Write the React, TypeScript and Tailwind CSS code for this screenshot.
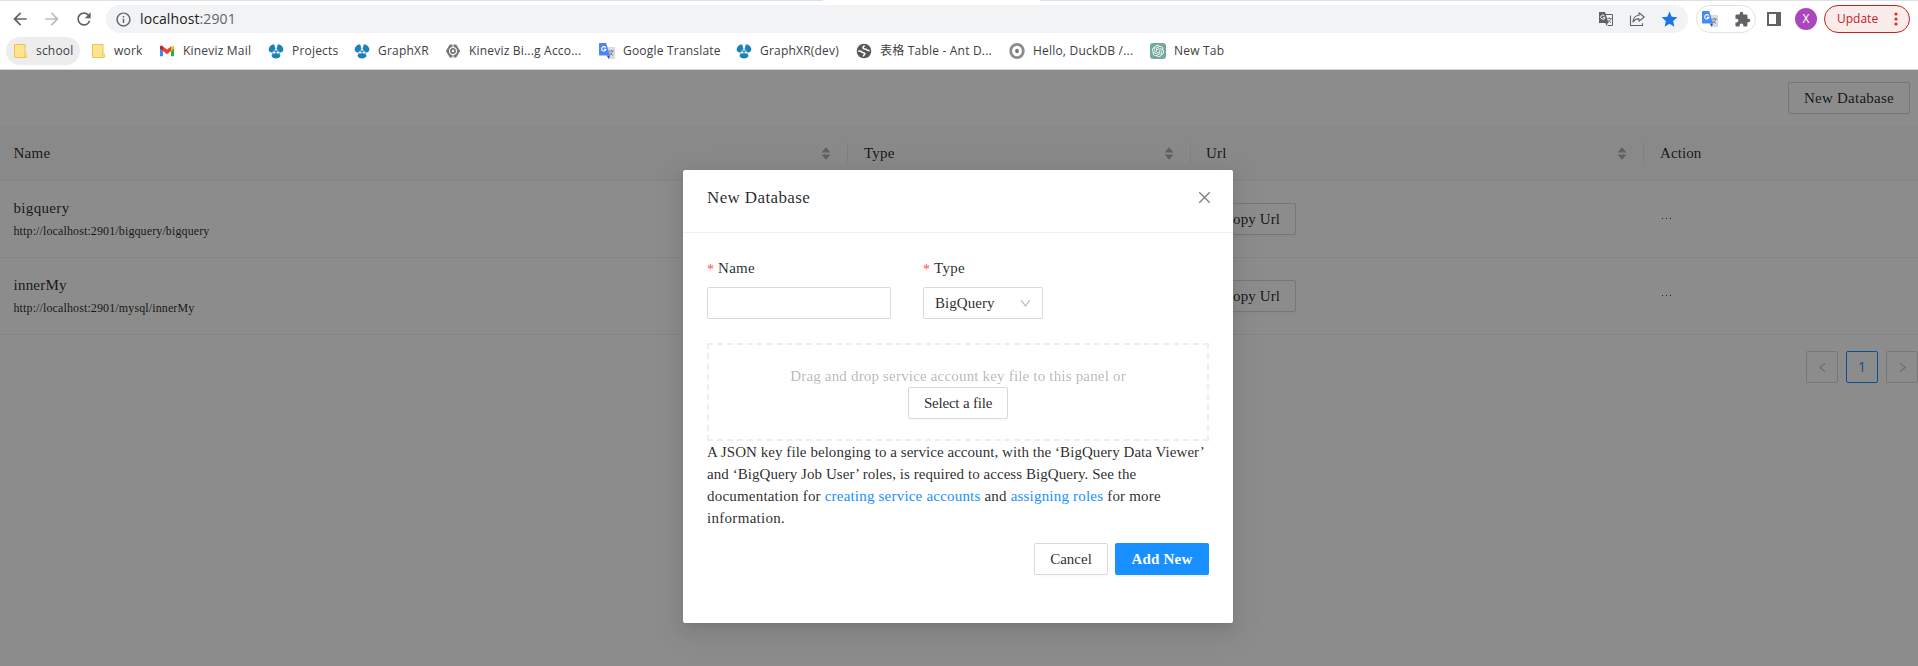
import type { ReactNode } from "react";
import {
  AiFillCaretDown,
  AiFillCaretUp,
  AiOutlineClose,
  AiOutlineDown,
  AiOutlineLeft,
  AiOutlineRight,
} from "react-icons/ai";
import { MdArrowBack, MdArrowForward, MdExtension, MdInfoOutline, MdRefresh, MdStar } from "react-icons/md";
import { SiOpenai } from "react-icons/si";

/* ---------- browser icons ---------- */

function FolderIcon() {
  return (
    <svg viewBox="0 0 16 16" className="size-4">
      <path d="M1.5 1.5h10.5v9.5l1 0v3.5H1.5z" fill="#ffe48f" stroke="#eac54f" />
      <path d="M11.5 14.5v-3.5c0-1 1.8-1 1.8 0v3.5z" fill="#ffe9a6" stroke="#eac54f" strokeWidth=".8" />
    </svg>
  );
}

function GmailIcon() {
  return (
    <svg viewBox="0 0 16 16" className="size-4">
      <path d="M1 4v9.2h3V7.4z" fill="#4285f4" />
      <path d="M15 4v9.2h-3V7.4z" fill="#34a853" />
      <path d="M12 3.6 15 3v2.6l-3 2.6z" fill="#fbbc04" />
      <path d="M1 5.6V4c0-1.2 1.4-1.8 2.4-1.1L4 3.4v4.7z" fill="#c5221f" />
      <path d="M4 3.4 8 6.5l4-3.1v4.7L8 11.2 4 8.1z" fill="#ea4335" />
    </svg>
  );
}

function GraphIcon() {
  return (
    <svg viewBox="0 0 16 16" className="size-4">
      <g fill="#1c81b8">
        <path d="M7.300 6 6.300 1.600C3.800 .8 .8 3.400.7 6.600c0 1.800 1.600 3.400 3.400 2.900z" />
        <path d="M8.700 6 9.700 1.600c2.500-.8 5.500 1.800 5.600 5 0 1.800-1.600 3.400-3.400 2.900z" />
        <path d="M5 10.300 3.400 12.800c.3 1.600 2.400 2.700 4.600 2.700s4.300-1.100 4.600-2.700L11 10.300z" />
        <path d="M8 4.500 4 10.800h8z" />
      </g>
      <path d="M8 6.200 5.900 9.700h4.200z" fill="none" stroke="#d9edf7" strokeWidth=".8" />
      <circle cx="8" cy="6.200" r=".9" fill="#fff" />
      <circle cx="5.900" cy="9.700" r=".9" fill="#fff" />
      <circle cx="10.100" cy="9.700" r=".9" fill="#fff" />
    </svg>
  );
}

function HexIcon() {
  return (
    <svg viewBox="0 0 16 16" className="size-4">
      <path d="M5 2.200h6L14.400 8 11 13.800H5L1.600 8z" fill="#757575" stroke="#757575" strokeWidth="1.200" strokeLinejoin="round" />
      <circle cx="8" cy="8" r="4" fill="#fff" />
      <path d="M8 .8v4M8 11.200v4" stroke="#fff" strokeWidth="1" />
      <circle cx="8" cy="8" r="2.100" fill="#fff" stroke="#757575" strokeWidth="1.700" />
    </svg>
  );
}

function TranslateIcon({ className = "size-4" }: { className?: string }) {
  return (
    <svg viewBox="0 0 16 16" className={className}>
      <path d="M6 4h9.200c.5 0 .8.3.8.8v10.400c0 .5-.3.8-.8.8H10z" fill="#d9dbdf" />
      <path d="M10 8h4.800M12.300 7v1M13.600 8c-.4 2-1.600 3.400-3.200 4.200M11 9.500c.6 1.300 1.600 2.300 3 3" stroke="#6d7b87" fill="none" strokeWidth=".9" />
      <path d="M7.600 12.600 11 12.600 9.800 16z" fill="#3448b8" />
      <path d="M.8 0h6.400L11 12.600H.8c-.5 0-.8-.3-.8-.8V.8C0 .3.300 0 .800 0z" fill="#4a87f5" />
      <path d="M6.700 4.600A2.200 2.200 0 1 0 7 6.400H4.900" stroke="#fff" fill="none" strokeWidth="1.100" />
    </svg>
  );
}

function TranslateMonoIcon() {
  return (
    <svg viewBox="0 0 16 16" className="size-4">
      <path d="M7 3.500h7.500v11H9.500" fill="none" stroke="#5f6368" />
      <path d="M9.500 7.500h4.200M11.500 6.500v1M12.900 7.500c-.4 1.900-1.400 3-2.900 3.800M10.400 9c.6 1.200 1.400 2 2.600 2.700" stroke="#5f6368" fill="none" strokeWidth=".8" />
      <path d="M1 1h6l3.500 11H1z" fill="#5f6368" />
      <path d="M9.800 12 8.500 14.800 7.300 12z" fill="#5f6368" />
      <path d="M6.600 5A2.100 2.100 0 1 0 6.900 6.700H4.900" stroke="#fff" fill="none" strokeWidth="1" />
    </svg>
  );
}

function GlobeIcon() {
  return (
    <svg viewBox="0 0 16 16" className="size-4">
      <circle cx="8" cy="8" r="7.300" fill="#55585d" />
      <path d="M2.200 8.200c1.500-.3 2.700-.2 3.700.9 1 1 2.500.3 3 1.400.4 1.100-1.400 1.400-1.600 3" fill="none" stroke="#fff" strokeWidth="1.500" />
      <path d="M8.600 2.600c-1.200.8-2 1.700-1.400 2.800.6 1 2.400.3 3.200 1.200.7.900 1.800 1.100 3.300.9" fill="none" stroke="#fff" strokeWidth="1.500" />
    </svg>
  );
}

function DuckIcon() {
  return (
    <svg viewBox="0 0 16 16" className="size-4">
      <ellipse cx="8" cy="8" rx="6.300" ry="6.600" fill="#fff" stroke="#8c8c8c" strokeWidth="2.800" />
      <ellipse cx="8" cy="8" rx="1.900" ry="2.300" fill="#777" />
    </svg>
  );
}

function GptIcon() {
  return (
    <span className="flex size-4 items-center justify-center rounded-[3px] bg-[#74aa9c] text-white">
      <SiOpenai className="size-3" />
    </span>
  );
}

function ShareIcon() {
  return (
    <svg viewBox="0 0 16 16" className="size-4" fill="none" stroke="#5f6368" strokeWidth="1.100">
      <path d="M1.500 4.500v10h12v-2.200" />
      <path d="M10 1.800 15.200 6 10 10.200V7.900C7 7.800 5.200 8.800 4 11.100c.1-3.500 2-6.500 6-6.900z" strokeLinejoin="round" />
    </svg>
  );
}

/* ---------- browser chrome ---------- */

function Bookmark({ width, icon, label, gap = "gap-2" }: { width: string; icon: ReactNode; label: string; gap?: string }) {
  return (
    <div className={`flex shrink-0 items-center whitespace-nowrap ${gap} ${width}`}>
      <span className="shrink-0">{icon}</span>
      <span>{label}</span>
    </div>
  );
}

function Browser() {
  return (
    <header className="flex h-[70px] flex-col border-b border-[#d4d5d8] bg-white font-['Open_Sans','Noto_Sans_CJK_SC',sans-serif]">
      <div className="flex h-px shrink-0 justify-between">
        <div className="w-[823px] bg-[#dee1e6]" />
        <div className="w-[878px] bg-[#dee1e6]" />
      </div>
      <div className="flex h-9 shrink-0 items-center text-[#5f6368]">
        <div className="flex w-[106px] shrink-0 items-center gap-3 pl-[10px]">
          <MdArrowBack className="size-5" />
          <MdArrowForward className="size-5 text-[#bbbdbf]" />
          <MdRefresh className="size-5" />
        </div>
        <div className="flex h-7 w-[1582px] shrink-0 items-center rounded-full bg-[#f1f3f4] pl-[9px] pr-[9px] text-[14px]">
          <MdInfoOutline className="size-[17px]" />
          <span className="ml-2 flex-1 leading-7 tracking-[0.1px]">
            <span className="text-[#202124]">localhost</span>:2901
          </span>
          <div className="flex items-center gap-[15px]">
            <TranslateMonoIcon />
            <ShareIcon />
            <MdStar className="size-[19px] text-[#1a73e8]" />
          </div>
        </div>
        <div className="ml-2 flex h-7 w-[60px] shrink-0 items-center justify-between rounded-full border border-[#e2e3e5] pl-[5px] pr-1">
          <TranslateIcon />
          <MdExtension className="size-[17px]" />
        </div>
        <svg viewBox="0 0 14 14" className="ml-[11px] size-[14px] shrink-0">
          <path d="M0 0h14v14H0zM2 2v10h7V2z" fill="#5f6368" fillRule="evenodd" />
        </svg>
        <div className="ml-[14px] flex size-[22px] shrink-0 items-center justify-center rounded-full bg-[#ab47bc] text-[12px] leading-none text-white">X</div>
        <div className="ml-[7px] flex h-7 w-[86px] shrink-0 items-center rounded-full border border-[#c5221f] bg-[#faeceb] pl-3 text-[12px] text-[#c5221f]">
          <span className="w-[50px]">Update</span>
          <svg viewBox="0 0 16 16" className="size-4 text-[#d93025]" fill="currentColor">
            <circle cx="9" cy="3" r="1.600" />
            <circle cx="9" cy="8" r="1.600" />
            <circle cx="9" cy="13" r="1.600" />
          </svg>
        </div>
      </div>
      <nav className="flex h-7 shrink-0 items-center pl-1.5 text-[12px] tracking-[0.2px] text-[#3c4043]">
        <div className="mr-[11px] flex h-7 w-[74px] shrink-0 items-center gap-[7px] rounded-full bg-[#ededed] pl-[7px]">
          <FolderIcon />
          <span>school</span>
        </div>
        <Bookmark width="w-[68px]" gap="gap-[7px]" icon={<FolderIcon />} label="work" />
        <Bookmark width="w-[109px]" icon={<GmailIcon />} label="Kineviz Mail" />
        <Bookmark width="w-[86px]" icon={<GraphIcon />} label="Projects" />
        <Bookmark width="w-[91px]" icon={<GraphIcon />} label="GraphXR" />
        <Bookmark width="w-[154px]" icon={<HexIcon />} label="Kineviz Bi...g Acco..." />
        <Bookmark width="w-[137px]" icon={<TranslateIcon />} label="Google Translate" />
        <Bookmark width="w-[120px]" icon={<GraphIcon />} label="GraphXR(dev)" />
        <Bookmark width="w-[153px]" icon={<GlobeIcon />} label="表格 Table - Ant D..." />
        <Bookmark width="w-[141px]" icon={<DuckIcon />} label="Hello, DuckDB /..." />
        <Bookmark width="w-[90px]" icon={<GptIcon />} label="New Tab" />
      </nav>
    </header>
  );
}

/* ---------- database list ---------- */

const columns = "grid grid-cols-[848px_343px_453px_1fr]";

function HeadCell({ children, pad = "pl-4" }: { children: string; pad?: string }) {
  return (
    <div className={`flex h-[22px] items-center justify-between border-r border-black/6 pr-[15px] ${pad}`}>
      <span>{children}</span>
      <span className="flex flex-col text-[#b0b0b0]">
        <AiFillCaretUp className="size-3" />
        <AiFillCaretDown className="-mt-[5px] size-3" />
      </span>
    </div>
  );
}

function Row({ name, url, type, tracking }: { name: string; url: string; type: string; tracking: string }) {
  return (
    <div className={`${columns} h-[77px] items-center border-b border-[#f0f0f0]`}>
      <div className="pl-[13.5px]">
        <div className={`pt-px leading-[22px] ${tracking}`}>{name}</div>
        <div className="mt-px text-[12px] leading-[22px] tracking-[0.12px]">{url}</div>
      </div>
      <div className="pl-4">{type}</div>
      <div className="pl-4">
        <button className="h-8 w-[89px] rounded-[2px] border border-[#d9d9d9] tracking-[0.1px] shadow-[0_2px_0_rgba(0,0,0,0.016)]">Copy Url</button>
      </div>
      <div className="flex gap-[3px] pb-px pl-[18px]">
        <i className="h-[1.5px] w-px bg-black/75" />
        <i className="h-[1.5px] w-px bg-black/75" />
        <i className="h-[1.5px] w-px bg-black/75" />
      </div>
    </div>
  );
}

function Databases() {
  return (
    <main>
      <div className="flex h-14 items-start justify-end pr-2 pt-3">
        <button className="h-8 w-[122px] rounded-[2px] border border-[#d9d9d9] tracking-[0.25px] shadow-[0_2px_0_rgba(0,0,0,0.016)]">New Database</button>
      </div>
      <div className={`${columns} h-[55px] items-center border-b border-[#f0f0f0] bg-[#fafafa] tracking-[0.25px]`}>
        <HeadCell pad="pl-[13.5px]">Name</HeadCell>
        <HeadCell>Type</HeadCell>
        <HeadCell pad="pl-[15px]">Url</HeadCell>
        <div className="pl-4 tracking-[0.1px]">Action</div>
      </div>
      <Row name="bigquery" url="http://localhost:2901/bigquery/bigquery" type="bigquery" tracking="tracking-[0.33px]" />
      <Row name="innerMy" url="http://localhost:2901/mysql/innerMy" type="mysql" tracking="tracking-[0.23px]" />
      <div className="flex justify-end gap-2 pt-4">
        <span className="flex size-8 items-center justify-center rounded-[2px] border border-[#d9d9d9] text-black/25">
          <AiOutlineLeft className="size-[13px]" />
        </span>
        <span className="flex size-8 items-center justify-center rounded-[2px] border border-[#1890ff] font-['Open_Sans',sans-serif] text-[14px] font-medium text-[#1890ff]">1</span>
        <span className="flex size-8 items-center justify-center rounded-[2px] border border-[#d9d9d9] text-black/25">
          <AiOutlineRight className="size-[13px]" />
        </span>
      </div>
    </main>
  );
}

/* ---------- dialog ---------- */

function Label({ children }: { children: string }) {
  return (
    <div className="flex h-[22px] items-center tracking-[0.3px]">
      <span className="w-[11px] pt-1 text-[14px] text-[#ff4d4f]">*</span>
      <span>{children}</span>
    </div>
  );
}

function Dialog() {
  return (
    <section className="h-[453px] w-[550px] rounded-[2px] bg-white shadow-[0_3px_6px_-4px_rgba(0,0,0,0.12),0_6px_16px_rgba(0,0,0,0.08),0_9px_28px_8px_rgba(0,0,0,0.05)]">
      <div className="flex h-[63px] items-start justify-between border-b border-[#f0f0f0] pl-6 pr-5 pt-4">
        <h1 className="text-[17px] leading-6 tracking-[0.37px]">New Database</h1>
        <AiOutlineClose className="mt-[3px] size-[17px] text-black/50" />
      </div>
      <div className="px-6 pt-6">
        <div className="flex gap-8">
          <div className="w-[184px]">
            <Label>Name</Label>
            <div className="mt-2 h-8 rounded-[2px] border border-[#d9d9d9]" />
          </div>
          <div className="w-[120px]">
            <Label>Type</Label>
            <div className="mt-2 flex h-8 items-center justify-between rounded-[2px] border border-[#d9d9d9] pl-[11px] pr-[10px]">
              <span className="tracking-[0.05px]">BigQuery</span>
              <AiOutlineDown className="size-[13px] text-black/30" />
            </div>
          </div>
        </div>
        <div className="mt-6 flex h-[98px] flex-col items-center border-2 border-dashed border-[#eeeeee] pt-5">
          <span className="leading-[22px] tracking-[0.18px] text-black/30">Drag and drop service account key file to this panel or</span>
          <button className="h-8 w-[100px] whitespace-nowrap rounded-[2px] border border-[#d9d9d9] tracking-[-0.2px] shadow-[0_2px_0_rgba(0,0,0,0.016)]">Select a file</button>
        </div>
        <div className="flex flex-col whitespace-nowrap leading-[22px] tracking-[0.055px]">
          <span>A JSON key file belonging to a service account, with the ‘BigQuery Data Viewer’</span>
          <span>and ‘BigQuery Job User’ roles, is required to access BigQuery. See the</span>
          <span className="tracking-[0.2px]">
            documentation for <a className="text-[#1890ff]">creating service accounts</a> and <a className="text-[#1890ff]">assigning roles</a> for more
          </span>
          <span className="tracking-[0.3px]">information.</span>
        </div>
        <div className="mt-[14px] flex justify-end gap-[7px]">
          <button className="h-8 w-[74px] rounded-[2px] border border-[#d9d9d9] shadow-[0_2px_0_rgba(0,0,0,0.016)]">Cancel</button>
          <button className="h-8 w-[94px] rounded-[2px] bg-[#1890ff] font-bold tracking-[0.2px] text-white shadow-[0_2px_0_rgba(0,0,0,0.045)]">Add New</button>
        </div>
      </div>
    </section>
  );
}

export default function App() {
  return (
    <div className="h-[666px] w-[1918px] overflow-hidden bg-white">
      <Browser />
      <div className="relative h-[596px] font-['Liberation_Serif',serif] text-[15px] leading-[22px] text-black/85">
        <Databases />
        <div className="absolute inset-0 flex items-start bg-black/45 pl-[683px] pt-[100px]">
          <Dialog />
        </div>
      </div>
    </div>
  );
}
